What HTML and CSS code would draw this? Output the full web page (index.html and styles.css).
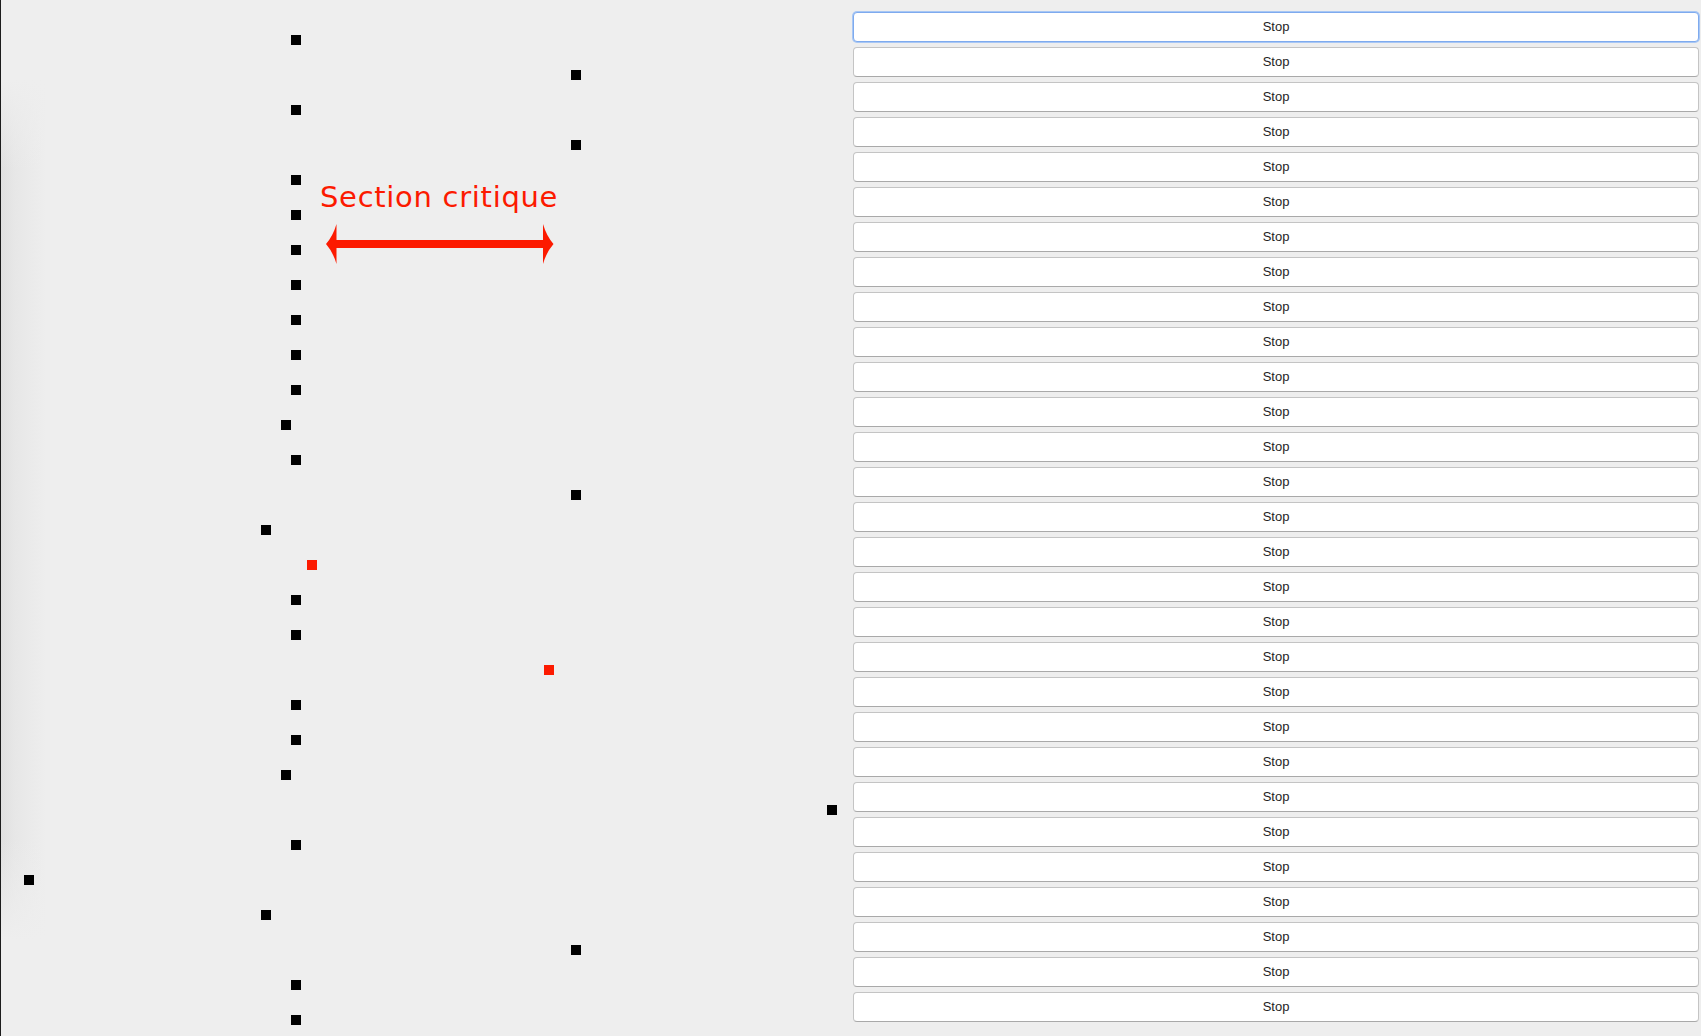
FILE: index.html
```html
<!DOCTYPE html>
<html lang="fr">
<head>
<meta charset="utf-8">
<title>Section critique</title>
<link rel="stylesheet" href="styles.css">
</head>
<body>
<div class="window">
  <div class="canvas">
    <div class="label">Section critique</div>
    <svg class="arrow" width="228" height="40" viewBox="0 0 228 40">
      <path d="M0,20 Q7,12 10.5,0 L10.5,40 Q7,28 0,20 Z" />
      <rect x="10" y="16" width="208" height="8" />
      <path d="M227.5,20 Q220.5,12 217,0 L217,40 Q220.5,28 227.5,20 Z" />
    </svg>
    <div class="dot" style="left:291px;top:35px"></div>
    <div class="dot" style="left:571px;top:70px"></div>
    <div class="dot" style="left:291px;top:105px"></div>
    <div class="dot" style="left:571px;top:140px"></div>
    <div class="dot" style="left:291px;top:175px"></div>
    <div class="dot" style="left:291px;top:210px"></div>
    <div class="dot" style="left:291px;top:245px"></div>
    <div class="dot" style="left:291px;top:280px"></div>
    <div class="dot" style="left:291px;top:315px"></div>
    <div class="dot" style="left:291px;top:350px"></div>
    <div class="dot" style="left:291px;top:385px"></div>
    <div class="dot" style="left:281px;top:420px"></div>
    <div class="dot" style="left:291px;top:455px"></div>
    <div class="dot" style="left:571px;top:490px"></div>
    <div class="dot" style="left:261px;top:525px"></div>
    <div class="dot dot-red" style="left:307px;top:560px"></div>
    <div class="dot" style="left:291px;top:595px"></div>
    <div class="dot" style="left:291px;top:630px"></div>
    <div class="dot dot-red" style="left:544px;top:665px"></div>
    <div class="dot" style="left:291px;top:700px"></div>
    <div class="dot" style="left:291px;top:735px"></div>
    <div class="dot" style="left:281px;top:770px"></div>
    <div class="dot" style="left:827px;top:805px"></div>
    <div class="dot" style="left:291px;top:840px"></div>
    <div class="dot" style="left:24px;top:875px"></div>
    <div class="dot" style="left:261px;top:910px"></div>
    <div class="dot" style="left:571px;top:945px"></div>
    <div class="dot" style="left:291px;top:980px"></div>
    <div class="dot" style="left:291px;top:1015px"></div>
  </div>
  <div class="controls">
    <button class="stop stop-focus">Stop</button>
    <button class="stop">Stop</button>
    <button class="stop">Stop</button>
    <button class="stop">Stop</button>
    <button class="stop">Stop</button>
    <button class="stop">Stop</button>
    <button class="stop">Stop</button>
    <button class="stop">Stop</button>
    <button class="stop">Stop</button>
    <button class="stop">Stop</button>
    <button class="stop">Stop</button>
    <button class="stop">Stop</button>
    <button class="stop">Stop</button>
    <button class="stop">Stop</button>
    <button class="stop">Stop</button>
    <button class="stop">Stop</button>
    <button class="stop">Stop</button>
    <button class="stop">Stop</button>
    <button class="stop">Stop</button>
    <button class="stop">Stop</button>
    <button class="stop">Stop</button>
    <button class="stop">Stop</button>
    <button class="stop">Stop</button>
    <button class="stop">Stop</button>
    <button class="stop">Stop</button>
    <button class="stop">Stop</button>
    <button class="stop">Stop</button>
    <button class="stop">Stop</button>
    <button class="stop">Stop</button>
  </div>
</div>
</body>
</html>
```
FILE: styles.css
```css
html, body {
  margin: 0;
  padding: 0;
  background: #eeeeee;
  overflow: hidden;
}

.window {
  width: 1701px;
  height: 1036px;
  display: flex;
  box-shadow: inset 1px 0 0 #1c1c1c;
  background:
    linear-gradient(to bottom, #eeeeee 0, rgba(238, 238, 238, 0) 90px, rgba(238, 238, 238, 0) 760px, #eeeeee 860px) no-repeat 1px 80px / 50px 860px,
    linear-gradient(to right, #e0e0e0, #e7e7e7 14px, #eeeeee 45px) no-repeat 1px 80px / 50px 860px,
    #eeeeee;
}

.canvas {
  position: relative;
  width: 853px;
  flex: none;
  height: 100%;
}

.label {
  position: absolute;
  left: 320px;
  top: 183px;
  font-family: "DejaVu Sans", "Open Sans", sans-serif;
  font-size: 29px;
  line-height: 29px;
  letter-spacing: 0.7px;
  color: #fc1a00;
  white-space: nowrap;
}

.arrow {
  position: absolute;
  left: 326px;
  top: 224px;
  fill: #fc1a00;
}

.dot {
  position: absolute;
  width: 10px;
  height: 10px;
  background: #000000;
}

.dot-red {
  background: #fc1a00;
}

.controls {
  flex: 1;
  display: flex;
  flex-direction: column;
  gap: 5px;
  padding: 12px 2px 0 0;
}

.stop {
  height: 30px;
  margin: 0;
  padding: 0 0 2px;
  box-sizing: border-box;
  background: #ffffff;
  border: 1px solid #c4c4c4;
  border-bottom-color: #a9a9a9;
  border-radius: 4px;
  font-family: "Liberation Sans", Arial, sans-serif;
  font-size: 13px;
  color: #1e1e1e;
  text-align: center;
}

.stop-focus {
  border-color: #7eaaee;
  box-shadow: 0 0 0 1px #a8c7f4;
}
```
